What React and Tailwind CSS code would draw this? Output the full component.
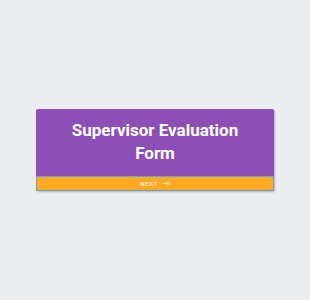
import React from 'react';

export default function App() {
  return (
    <div className="flex h-[300px] w-full items-center justify-center bg-[#ecedf1]" style={{ fontFamily: 'Roboto, "Liberation Sans", sans-serif' }}>
      <div className="w-[238px] rounded-[2px] shadow-[1px_1px_2px_rgba(0,0,0,0.25)]">
        <div className="rounded-t-[2px] bg-[#8c4fb5] px-4 pt-[10px] pb-[11px] text-center">
          <h1 className="text-[17px] font-bold leading-[23px] text-white">Supervisor Evaluation Form</h1>
        </div>
        <button className="flex h-[15px] w-full items-center justify-center gap-[5px] border border-[#6fa3c4] bg-[#ffaa22] text-[6px] tracking-[0.6px] text-white">
          <span>NEXT</span>
          <svg width="7" height="5" viewBox="0 0 7 5" fill="none" stroke="white" strokeWidth="0.8">
            <path d="M0 2.5H6.2M4.2 0.5L6.2 2.5L4.2 4.5" />
          </svg>
        </button>
      </div>
    </div>
  );
}
